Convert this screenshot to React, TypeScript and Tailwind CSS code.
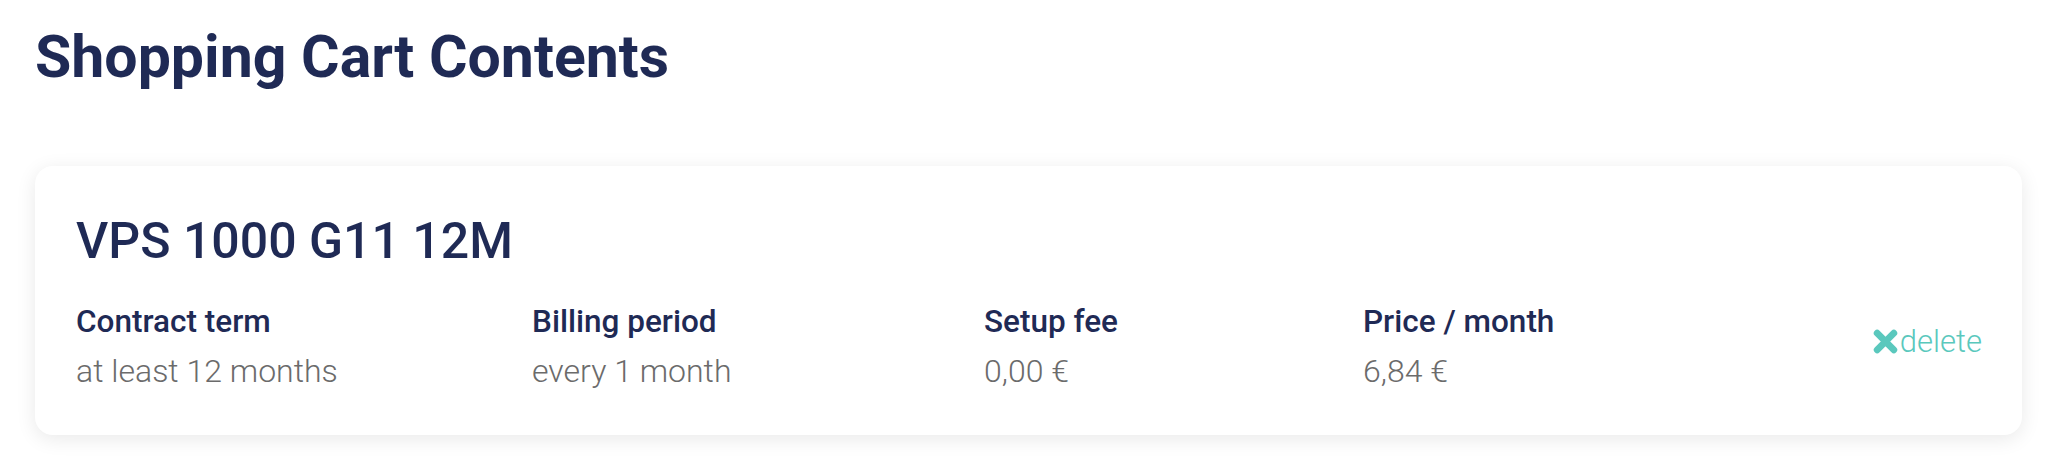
import React from "react";

const navy = "text-[#1f2a55]";

function Field({ label, value, width }: { label: string; value: string; width: string }) {
  return (
    <div className={`flex flex-col ${width}`}>
      <div className={`text-[31.5px] leading-[36px] font-medium ${navy}`}>{label}</div>
      <div className="mt-[13px] text-[32px] leading-[36px] font-light text-[#6b6b6b]">{value}</div>
    </div>
  );
}

export default function App() {
  return (
    <div className="min-h-[457px] bg-white pl-[35px] pr-[26px] pt-[22px]" style={{ fontFamily: "Roboto, 'Open Sans', sans-serif" }}>
      <h1 className={`text-[59px] leading-[70px] font-bold ${navy}`}>Shopping Cart Contents</h1>
      <div className="mt-[74px] rounded-[18px] bg-white pl-[41px] pr-[40px] pt-[47px] pb-[46px] shadow-[0_4px_20px_rgba(0,0,0,0.09)]">
        <div className={`text-[50px] leading-[56px] font-medium ${navy}`}>VPS 1000 G11 12M</div>
        <div className="mt-[35px] flex items-center">
          <Field label="Contract term" value="at least 12 months" width="w-[456px]" />
          <Field label="Billing period" value="every 1 month" width="w-[452px]" />
          <Field label="Setup fee" value="0,00 €" width="w-[379px]" />
          <Field label="Price / month" value="6,84 €" width="flex-1" />
          <button className="flex items-center gap-[2px] text-[#5ac8bd] text-[31px] leading-[36px] font-light mt-[-10px]">
            <svg width="25" height="25" viewBox="0 0 24 24" aria-hidden="true">
              <path d="M4 4 L20 20 M20 4 L4 20" stroke="#5ac8bd" strokeWidth="6.5" strokeLinecap="round" fill="none" />
            </svg>
            <span>delete</span>
          </button>
        </div>
      </div>
    </div>
  );
}
